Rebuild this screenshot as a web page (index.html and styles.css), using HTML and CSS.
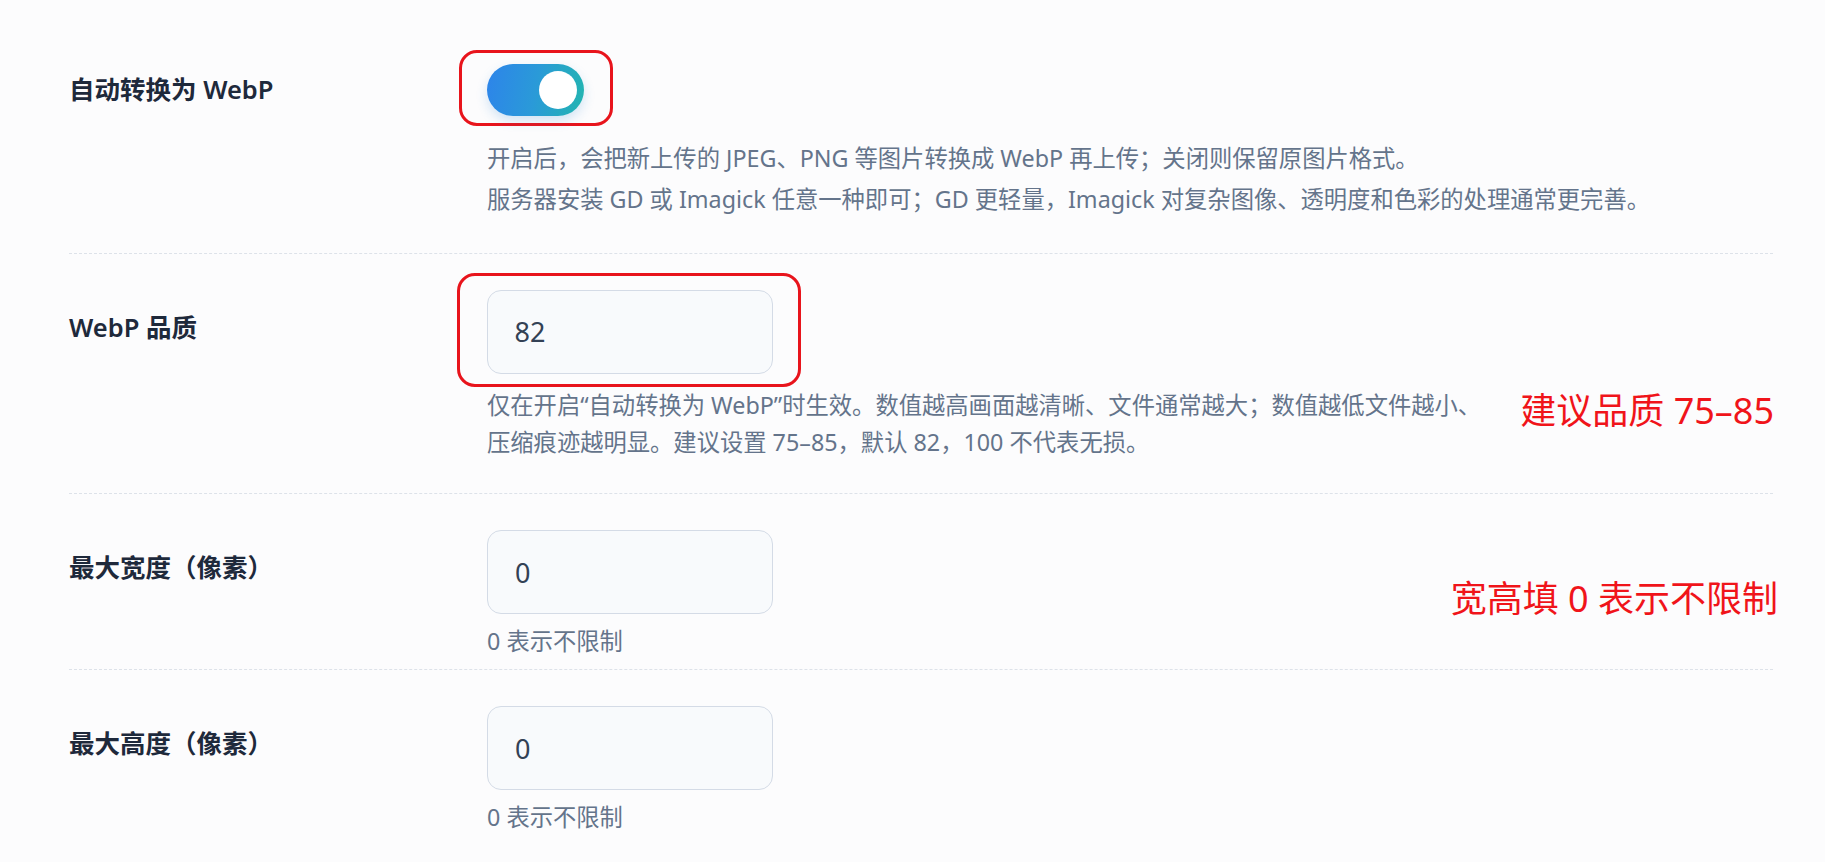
FILE: index.html
```html
<!DOCTYPE html>
<html lang="zh-CN">
<head>
  <meta charset="UTF-8" />
  <title>图片设置</title>
  <link rel="stylesheet" href="styles.css">
</head>
<body>

<div class="settings">
  <!--  AUTO WEBP  -->
  <div class="row row-first">
    <div class="row-label">自动转换为 WebP</div>
    <div class="row-field">
      <span class="mark mark-switch">
        <label class="switch">
          <input type="checkbox" checked>
          <span class="slider"></span>
        </label>
      </span>
      <div class="desc">
        <p>开启后，会把新上传的 JPEG、PNG 等图片转换成 WebP 再上传；关闭则保留原图片格式。</p>
        <p>服务器安装 GD 或 Imagick 任意一种即可；GD 更轻量，Imagick 对复杂图像、透明度和色彩的处理通常更完善。</p>
      </div>
    </div>
  </div>

  <!--  QUALITY  -->
  <div class="row">
    <div class="row-label">WebP 品质</div>
    <div class="row-field">
      <span class="mark mark-input">
        <input class="field" type="text" value="82">
      </span>
      <div class="desc desc-tight">
        <p>仅在开启“自动转换为 WebP”时生效。数值越高画面越清晰、文件通常越大；数值越低文件越小、<br>压缩痕迹越明显。建议设置 75–85，默认 82，100 不代表无损。</p>
      </div>
    </div>
    <div class="note note-quality">建议品质 75–85</div>
  </div>

  <!--  MAX WIDTH  -->
  <div class="row">
    <div class="row-label">最大宽度（像素）</div>
    <div class="row-field">
      <input class="field" type="text" value="0">
      <div class="hint">0 表示不限制</div>
    </div>
    <div class="note note-size">宽高填 0 表示不限制</div>
  </div>

  <!--  MAX HEIGHT  -->
  <div class="row row-last">
    <div class="row-label">最大高度（像素）</div>
    <div class="row-field">
      <input class="field" type="text" value="0">
      <div class="hint">0 表示不限制</div>
    </div>
  </div>
</div>

</body>
</html>
```

FILE: styles.css
```css
/* ----------  GLOBAL  ---------- */
*{box-sizing:border-box}
html,body{margin:0;padding:0}
body{background:#fcfcfd;color:#1e293b;font-family:"Noto Sans","Noto Sans CJK SC",sans-serif;overflow:hidden}
.settings{width:1704px;margin-left:69px;padding-top:28px}

/* ----------  ROWS  ---------- */
.row{position:relative;display:grid;grid-template-columns:418px 1fr;align-items:start;padding:36px 0 8px;border-bottom:1px dashed #dde2e9}
.row-last{border-bottom:none}
.row-label{font-size:25.5px;font-weight:600;line-height:36px;padding-top:19px;color:#1e293b;white-space:nowrap}
.row-first .row-label{padding-top:7px}
.row-field{display:flex;flex-direction:column;align-items:flex-start}

/* ----------  CONTROLS  ---------- */
.field{width:286px;height:84px;padding:0 0 0 27px;border:1.5px solid #d4dbe6;border-radius:14px;background:#f8fafc;color:#334155;font-family:inherit;font-size:27px;outline:none}

.switch{position:relative;display:block;width:97px;height:52px;cursor:pointer}
.switch input{position:absolute;opacity:0;width:0;height:0}
.slider{position:absolute;inset:0;border-radius:26px;background:#cbd5e1;box-shadow:0 5px 12px rgba(40,130,210,.2)}
.slider:before{content:"";position:absolute;top:7px;left:7px;width:38px;height:38px;border-radius:50%;background:#fff}
.switch input:checked + .slider{background:linear-gradient(100deg,#2d84ea 0%,#2a9ad8 50%,#22b5b0 100%)}
.switch input:checked + .slider:before{left:52px}

/* ----------  TEXT  ---------- */
.desc,.hint{font-size:23.3px;line-height:37px;color:#64748b;white-space:nowrap}
.desc{margin:25px 0 27px}
.desc p{margin:0}
.desc p + p{margin-top:4px}
.desc-tight{margin-top:14px;margin-bottom:24px}
.hint{margin-top:9px}
.row:nth-child(3){padding-bottom:9px}

/* ----------  ANNOTATIONS  ---------- */
.mark{display:inline-flex;border:3.5px solid #e8141c;border-radius:18px}
.mark-switch{padding:10.5px 26.5px 7.5px 24.5px;margin:-14px -30px -11px -28px}
.mark-input{padding:13.5px 25.5px 10.5px 26.5px;margin:-17px -29px -14px -30px}
.note{position:absolute;font-size:36px;line-height:36px;color:#f0141a;white-space:nowrap}
.note-quality{right:-1px;top:139px}
.note-size{right:-5px;top:87px}
```
